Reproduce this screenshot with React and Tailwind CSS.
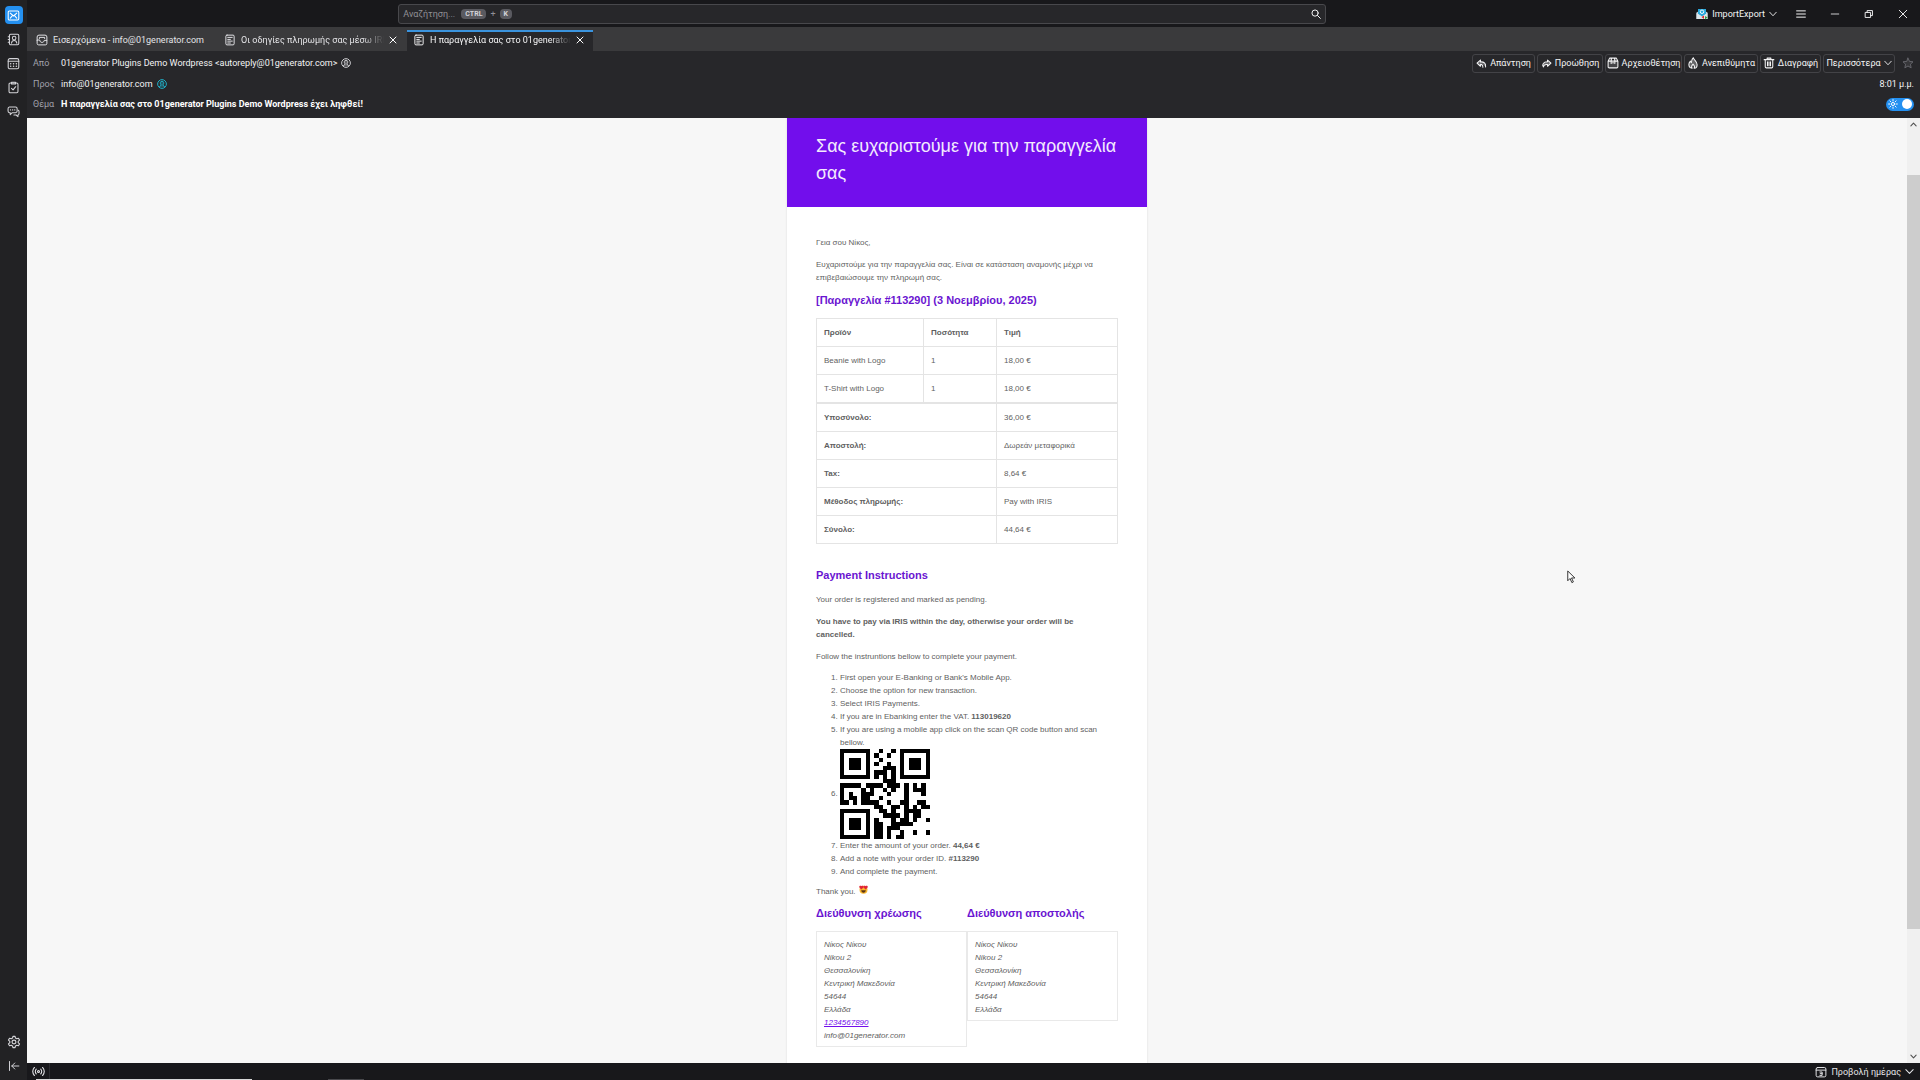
import React from "react";

function Icon({ children, className = "size-3", box = 16, sw = 1.3 }) {
  return (
    <svg
      viewBox={`0 0 ${box} ${box}`}
      className={`shrink-0 ${className}`}
      fill="none"
      stroke="currentColor"
      strokeWidth={sw}
      strokeLinecap="round"
      strokeLinejoin="round"
      aria-hidden="true"
    >
      {children}
    </svg>
  );
}

const MailIcon = () => (
  <Icon className="size-[13px]">
    <rect x="1.5" y="2.5" width="13" height="11" rx="1.5" />
    <path d="M4 5l4 3.6L12 5M4 11.3l2.2-2.6M12 11.3L9.8 8.7" />
  </Icon>
);
const BookIcon = () => (
  <Icon className="size-[13px]">
    <rect x="3" y="1.5" width="11.5" height="13" rx="1.5" />
    <path d="M1.5 4.5H3M1.5 8H3M1.5 11.5H3M5.5 12.5c.3-2 1.3-3.3 3.3-3.3s3 1.3 3.3 3.3" />
    <circle cx="8.8" cy="6.3" r="2.2" />
  </Icon>
);
const CalendarIcon = () => (
  <Icon className="size-[13px]">
    <rect x="1.5" y="2" width="13" height="12.5" rx="2" />
    <path d="M1.5 5.2h13" />
    <path d="M4.5 8.3h.1M8 8.3h.1M11.5 8.3h.1M4.5 11.3h.1M8 11.3h.1M11.5 11.3h.1" strokeWidth="1.8" />
  </Icon>
);
const TasksIcon = () => (
  <Icon className="size-[13px]">
    <rect x="2.5" y="2.5" width="11" height="12" rx="1.5" />
    <path d="M5.5 1.5h5v2.3h-5zM5.5 9l2 2 3.2-4" />
  </Icon>
);
const ChatIcon = () => (
  <Icon className="size-[13px]">
    <path d="M3 2.500h7.500a2 2 0 0 1 2 2v3a2 2 0 0 1-2 2H6.500L4 11.800V9.500H3a2 2 0 0 1-1.700-2v-3A2 2 0 0 1 3 2.500z" />
    <path d="M14 6.500c.6.400.8 1 .8 1.700v2.300c0 1-.5 1.600-1.300 1.800v2l-2.300-2H8.500" />
    <path d="M4.300 6h.1M6.900 6h.1M9.500 6h.1" strokeWidth="1.600" />
  </Icon>
);
const GearIcon = () => (
  <Icon className="size-[14px]">
    <path d="M6.800 1.500h2.400l.5 2 1.400.8 2-.6 1.200 2.100-1.500 1.400v1.600l1.500 1.400-1.200 2.100-2-.6-1.400.8-.5 2H6.800l-.5-2-1.400-.8-2 .6-1.200-2.100 1.500-1.400V7.200L1.700 5.800l1.200-2.100 2 .6 1.400-.8z" />
    <circle cx="8" cy="8" r="2.200" />
  </Icon>
);
const CollapseIcon = () => (
  <Icon className="size-3">
    <path d="M2 2v12M14.500 8H5M9 4L5 8l4 4" />
  </Icon>
);
const InboxIcon = () => (
  <Icon className="size-3">
    <path d="M1.500 8.500V12.500a2 2 0 0 0 2 2h9a2 2 0 0 0 2-2V8.500H11c-.3 1.800-1.300 2.700-3 2.700s-2.700-.9-3-2.700z" />
    <path d="M1.500 8.500V4a2.500 2.500 0 0 1 2.500-2.500h8A2.500 2.500 0 0 1 14.500 4v4.500M4.500 6V4.500h7V6" />
  </Icon>
);
const LetterIcon = () => (
  <Icon className="size-3">
    <rect x="2.500" y="1.500" width="11" height="13" rx="1.500" />
    <path d="M5 4.500h6M5 7.200h3.500M5 9.500h6M5 12h3.500" />
  </Icon>
);
const PersonIcon = ({ color }) => (
  <svg viewBox="0 0 16 16" className={`size-[10px] shrink-0 ${color}`} fill="none" stroke="currentColor" strokeWidth="1.5" aria-hidden="true">
    <circle cx="8" cy="8" r="7" />
    <path d="M3.800 13.300c.2-1.800 1-2.500 2.400-2.800V9C4.600 7.500 4.800 3.500 8 3.500s3.400 4 1.800 5.500v1.500c1.400.3 2.200 1 2.400 2.800" fill="currentColor" fillOpacity=".35" />
  </svg>
);
const CloseIcon = ({ className = "size-2", sw = 2 }) => (
  <Icon className={className} sw={sw}>
    <path d="M2 2l12 12M14 2L2 14" />
  </Icon>
);
const Chevron = ({ className = "size-2" }) => (
  <Icon className={className} sw={1.8}>
    <path d="M1.500 4.500L8 11.500l6.500-7" />
  </Icon>
);
const ReplyIcon = () => (
  <Icon className="size-[11px]" sw={1.5}>
    <path d="M6.500 3L1.500 7.500l5 4.500V9.300c2-.2 3.500.5 3.500 4.200M6.500 5.700V3M6.500 5.700c5-.4 8 2 7.500 7.300" fill="currentColor" fillOpacity=".35" />
  </Icon>
);
const ForwardIcon = () => (
  <Icon className="size-[11px]" sw={1.5}>
    <path d="M9.500 3l5 4.500-5 4.500V9.500C6 9 4 10 3.500 13 1 9.500 3.500 5.500 9.500 5.600z" fill="currentColor" fillOpacity=".35" />
  </Icon>
);
const ArchiveIcon = () => (
  <Icon className="size-3" sw={1.4}>
    <path d="M1.500 5.500L3.500 1.500h9l2 4V13a1.500 1.500 0 0 1-1.500 1.500H3A1.500 1.500 0 0 1 1.500 13zM1.500 5.500h13M6 1.500l-.5 4v3L8 7.500l2.500 1v-3l-.5-4" fill="currentColor" fillOpacity=".15" />
  </Icon>
);
const FlameIcon = () => (
  <Icon className="size-3" sw={1.4}>
    <path d="M8.500 1c.5 3 5 5 5 9.200 0 2.800-2 4.800-4 4.800 1.300-2 .3-3.800-1.500-5.500C6.500 11 5.500 13 6.800 15 4.500 14.700 2.500 13 2.500 10c0-2 1-3.500 2-4.500.2 1 .6 1.600 1.300 2C5.800 5 6.500 2.500 8.500 1z" fill="currentColor" fillOpacity=".3" />
  </Icon>
);
const TrashIcon = () => (
  <Icon className="size-3" sw={1.4}>
    <path d="M1.500 3.500h13M5.500 3.500v-2h5v2M3 3.500V13a1.500 1.500 0 0 0 1.500 1.500h7A1.500 1.500 0 0 0 13 13V3.500M6 6.500v5M8 6.500v5M10 6.500v5" />
  </Icon>
);
const StarIcon = () => (
  <Icon className="size-3">
    <path d="M8 1.500l2 4.400 4.700.5-3.500 3.200 1 4.800L8 12l-4.200 2.400 1-4.800L1.300 6.400 6 5.900z" fill="currentColor" fillOpacity=".25" />
  </Icon>
);
const BroadcastIcon = () => (
  <Icon className="size-[13px]">
    <path d="M3 3c-2.500 3-2.500 7 0 10M5.200 5c-1.500 2-1.500 4 0 6M13 3c2.500 3 2.500 7 0 10M10.800 5c1.500 2 1.500 4 0 6" />
    <circle cx="8" cy="8" r="1.200" />
  </Icon>
);

const QR = [
  "111111100100101111111",
  "100000101001001000001",
  "101110100100001011101",
  "101110101001001011101",
  "101110100011101011101",
  "100000101110101000001",
  "111111101010101111111",
  "000000000011100000000",
  "111110111101110101010",
  "100001010010100101110",
  "101001110001000100010",
  "101101100100000100000",
  "110101111001001100110",
  "000000001100110101011",
  "111111100110100111100",
  "100000100011110101100",
  "101110101000101101001",
  "101110101100111110000",
  "101110101101110000000",
  "100000101101001001001",
  "111111101101011000000",
];

const QrCode = () => (
  <svg viewBox="0 0 21 21" className="inline-block size-[90px] align-middle" shapeRendering="crispEdges" role="img" aria-label="QR">
    {QR.map((row, y) =>
      [...row].map((c, x) => (c === "1" ? <rect key={`${x}-${y}`} x={x} y={y} width="1" height="1" fill="#000" /> : null))
    )}
  </svg>
);

const HeartEyes = () => (
  <svg viewBox="0 0 18 18" className="ml-px inline-block size-[9px] align-baseline" role="img" aria-label="😍">
    <circle cx="9" cy="9.500" r="8" fill="#f8b62b" />
    <path d="M4.500 10.500h9c0 3-2 5-4.500 5s-4.500-2-4.500-5z" fill="#5b3416" />
    <path d="M4.800 9L.8 5C-.8 2.500 2.800-.3 4.800 2.300 6.800-.3 10 2.500 8.600 5zM13.200 9l-4-4c-1.400-2.500 2-5.300 4-2.700 2-2.600 5.600.2 4 2.700z" fill="#e0243a" />
  </svg>
);

function RailButton({ label, active, children }) {
  return (
    <button
      aria-label={label}
      className={`flex h-[18px] w-[18px] items-center justify-center rounded-sm ${active ? "bg-[#2490f0] text-white" : "text-[#d4d4d8]"}`}
    >
      {children}
    </button>
  );
}

function Tab({ icon, children, active, closable, className }) {
  return (
    <div
      role="tab"
      aria-selected={!!active}
      className={`flex items-center gap-[5px] pl-[6px] ${active ? "mt-[3px] border-t-2 border-[#3a93dd] bg-[#27272a] pb-[3px] text-[#f4f4f5]" : "pt-px text-[#e4e4e7]"} ${className}`}
    >
      {icon}
      <span
        className={`min-w-0 flex-1 overflow-hidden whitespace-nowrap ${closable ? "[mask-image:linear-gradient(to_right,black_85%,transparent)]" : ""}`}
      >
        {children}
      </span>
      {closable && (
        <button aria-label="Κλείσιμο" className="mr-[9px] text-white">
          <CloseIcon />
        </button>
      )}
    </div>
  );
}

function ActionButton({ icon, children, className }) {
  return (
    <button className={`flex h-[19px] items-center justify-center gap-[3px] rounded-[3px] border border-[#434347] whitespace-nowrap ${className}`}>
      {icon}
      {children}
    </button>
  );
}

const keyClass = "rounded-sm bg-[#5a5a60] px-1 text-[7px] leading-[10px] font-bold text-[#d4d4d8]";

function TitleBar() {
  return (
    <div className="flex h-[27px] shrink-0 items-center bg-[#18181b] text-[#f4f4f5]">
      <div className="min-w-0 flex-[5]" />
      <label className="flex h-5 w-[49%] max-w-[935px] items-center gap-1 rounded-[3px] border border-[#48484c] bg-[#27272a] pr-1 pl-1">
        <input
          aria-label="Αναζήτηση"
          placeholder="Αναζήτηση..."
          className="w-[54px] bg-transparent text-[9px] text-white outline-none placeholder:text-[#909096]"
        />
        <span className="flex flex-1 items-center gap-1 text-[#909096]">
          <kbd className={`font-[inherit] ${keyClass}`}>CTRL</kbd>
          <span>+</span>
          <kbd className={`font-[inherit] ${keyClass}`}>K</kbd>
        </span>
        <Icon className="size-[10px]" sw={1.6}>
          <circle cx="6.500" cy="6.500" r="5" />
          <path d="M10.300 10.300L15 15" />
        </Icon>
      </label>
      <div className="flex min-w-0 flex-[8] items-center justify-end">
        <button className="mr-[19px] flex items-center gap-1">
          <svg viewBox="0 0 24 24" className="size-3" aria-hidden="true">
            <path d="M1 9l11-6 11 6v13H1z" fill="#c9d6df" />
            <path d="M4 2h16v10l-8 5-8-5z" fill="#2ba9dc" />
            <circle cx="12" cy="7.500" r="3.500" fill="none" stroke="#fff" strokeWidth="1.8" />
            <path d="M1 10l11 7 11-7v12H1z" fill="#dce5ea" />
            <path d="M11 18l5-3v7z" fill="#d92c2c" />
            <path d="M23 19l-5-3v7z" fill="#3b9b46" />
          </svg>
          ImportExport
          <Chevron />
        </button>
        <button aria-label="Μενού" className="mr-6">
          <Icon className="size-[10px]" sw={1.6}>
            <path d="M1 3h14M1 8h14M1 13h14" />
          </Icon>
        </button>
        <button aria-label="Ελαχιστοποίηση" className="mr-6">
          <Icon className="size-[10px]"><path d="M2 8h12" /></Icon>
        </button>
        <button aria-label="Επαναφορά" className="mr-6">
          <Icon className="size-[10px]" sw={1.5}>
            <path d="M2.500 5.500h8v8h-8zM5 5.500v-3h8.500v8h-3" />
          </Icon>
        </button>
        <button aria-label="Κλείσιμο παραθύρου" className="mr-3">
          <CloseIcon className="size-[10px]" sw={1.5} />
        </button>
      </div>
    </div>
  );
}

function MessageHeader() {
  const row = "flex items-center";
  const label = "w-7 shrink-0 text-[#a1a1aa]";
  return (
    <header className="relative h-[67px] shrink-0 bg-[#27272a] pr-[6px] pl-[6px] text-[#f4f4f5]">
      <div className={`${row} h-6`}>
        <span className={label}>Από</span>
        <span className="mr-1">01generator Plugins Demo Wordpress &lt;autoreply@01generator.com&gt;</span>
        <PersonIcon color="text-[#d4d4d8]" />
        <div className="ml-auto flex items-center gap-[2px]">
          <ActionButton icon={<ReplyIcon />} className="w-[63px]">Απάντηση</ActionButton>
          <ActionButton icon={<ForwardIcon />} className="w-[66px]">Προώθηση</ActionButton>
          <ActionButton icon={<ArchiveIcon />} className="w-[77px]">Αρχειοθέτηση</ActionButton>
          <ActionButton icon={<FlameIcon />} className="w-[74px]">Ανεπιθύμητα</ActionButton>
          <ActionButton icon={<TrashIcon />} className="w-[61px]">Διαγραφή</ActionButton>
          <ActionButton className="w-[72px]">Περισσότερα <Chevron /></ActionButton>
          <button aria-label="Αστέρι" className="ml-[5px] text-[#66666c]"><StarIcon /></button>
        </div>
      </div>
      <div className={`${row} h-[18px]`}>
        <span className={label}>Προς</span>
        <span className="mr-1">info@01generator.com</span>
        <PersonIcon color="text-[#20b8d0]" />
        <span className="ml-auto">8:01 μ.μ.</span>
      </div>
      <div className={`${row} h-[22px]`}>
        <span className={label}>Θέμα</span>
        <span className="font-bold text-white">Η παραγγελία σας στο 01generator Plugins Demo Wordpress έχει ληφθεί!</span>
        <label className="relative ml-auto flex h-[13px] w-7 items-center justify-between rounded-full bg-[#2490f0] px-[2px] text-white">
          <input type="checkbox" defaultChecked aria-label="Φωτεινή εμφάνιση" className="absolute inset-0 opacity-0" />
          <Icon className="size-[10px]" sw={1.5}>
            <circle cx="8" cy="8" r="2.500" />
            <path d="M8 1v2M8 13v2M1 8h2M13 8h2M3 3l1.500 1.500M11.500 11.500L13 13M13 3l-1.500 1.500M4.500 11.500L3 13" />
          </Icon>
          <span className="size-[10px] rounded-full bg-white" />
        </label>
      </div>
    </header>
  );
}

const items = [["Beanie with Logo", "1", "18,00 €"], ["T-Shirt with Logo", "1", "18,00 €"]];
const totals = [
  ["Υποσύνολο:", "36,00 €"],
  ["Αποστολή:", "Δωρεάν μεταφορικά"],
  ["Tax:", "8,64 €"],
  ["Μέθοδος πληρωμής:", "Pay with IRIS"],
  ["Σύνολο:", "44,64 €"],
];

const cell = "border border-[#e4e4e4] px-[7px] text-left";
const h2Class = "text-[11px] leading-[14px] font-bold text-[#6a14d1]";

function OrderTable() {
  return (
    <table className="w-full table-fixed border-collapse border border-[#e4e4e4]">
      <colgroup>
        <col className="w-[107px]" />
        <col className="w-[73px]" />
        <col />
      </colgroup>
      <thead>
        <tr className="h-7">
          {["Προϊόν", "Ποσότητα", "Τιμή"].map((t) => <th key={t} className={cell}>{t}</th>)}
        </tr>
      </thead>
      <tbody>
        {items.map((r) => (
          <tr key={r[0]} className="h-7">{r.map((t, i) => <td key={i} className={cell}>{t}</td>)}</tr>
        ))}
      </tbody>
      <tfoot>
        {totals.map(([k, v], i) => (
          <tr key={k} className={i === 0 ? "h-[29px]" : "h-7"}>
            <th colSpan={2} className={`${cell} ${i === 0 ? "border-t-2" : ""}`}>{k}</th>
            <td className={`${cell} ${i === 0 ? "border-t-2" : ""}`}>{v}</td>
          </tr>
        ))}
      </tfoot>
    </table>
  );
}

function Address({ title, lines, children }) {
  return (
    <section className="flex-1">
      <h2 className={`${h2Class} mb-[11px]`}>{title}</h2>
      <address className="border border-[#e9e9e9] px-[7px] pt-[6px] pb-1">
        {lines.map((l) => <div key={l}>{l}</div>)}
        {children}
      </address>
    </section>
  );
}

const addressLines = ["Νίκος Νίκου", "Nikou 2", "Θεσσαλονίκη", "Κεντρική Μακεδονία", "54644", "Ελλάδα"];

function Email() {
  return (
    <article className="w-[360px] bg-white font-['Liberation_Sans',Arial,sans-serif] text-[8px] leading-[13px] text-[#5f5f5f] shadow-[0_0_1px_1px_#eeeeee]">
      <h1 className="h-[89px] bg-[#720eec] px-[29px] pt-[15px] text-[18px] leading-[27px] text-[#f3eafd]">
        Σας ευχαριστούμε για την παραγγελία σας
      </h1>
      <div className="px-[29px] pt-[29px] pb-4">
        <p className="mb-[9px]">Γεια σου Νίκος,</p>
        <p className="mb-[9px]">Ευχαριστούμε για την παραγγελία σας. Είναι σε κατάσταση αναμονής μέχρι να επιβεβαιώσουμε την πληρωμή σας.</p>
        <h2 className={`${h2Class} mb-[11px]`}>[Παραγγελία #113290] (3 Νοεμβρίου, 2025)</h2>
        <OrderTable />
        <h2 className={`${h2Class} mt-6 mb-[11px]`}>Payment Instructions</h2>
        <p className="mb-[9px]">Your order is registered and marked as pending.</p>
        <p className="mb-[9px] font-bold">
          You have to pay via IRIS within the day, otherwise your order will be<br />cancelled.
        </p>
        <p className="mb-2">Follow the instruntions bellow to complete your payment.</p>
        <ol className="mb-[7px] list-decimal pl-6">
          <li>First open your E-Banking or Bank&apos;s Mobile App.</li>
          <li>Choose the option for new transaction.</li>
          <li>Select IRIS Payments.</li>
          <li>If you are in Ebanking enter the VAT. <b>113019620</b></li>
          <li>If you are using a mobile app click on the scan QR code button and scan<br />bellow.</li>
          <li><QrCode /></li>
          <li>Enter the amount of your order. <b>44,64 €</b></li>
          <li>Add a note with your order ID. <b>#113290</b></li>
          <li>And complete the payment.</li>
        </ol>
        <p className="mb-2">Thank you. <HeartEyes /></p>
        <div className="flex items-start">
          <Address title="Διεύθυνση χρέωσης" lines={addressLines}>
            <div><a href="tel:1234567890" className="text-[#720eec] underline">1234567890</a></div>
            <div>info@01generator.com</div>
          </Address>
          <Address title="Διεύθυνση αποστολής" lines={addressLines} />
        </div>
      </div>
    </article>
  );
}

export default function App() {
  return (
    <div className="flex h-screen overflow-hidden bg-[#18181b] font-[Roboto,'Noto_Sans',sans-serif] text-[9px] leading-[14px]">
      <nav className="flex w-[27px] shrink-0 flex-col items-center gap-[6px] bg-[#222224] pt-[6px] pb-[5px]">
        <RailButton label="Αλληλογραφία" active><MailIcon /></RailButton>
        <RailButton label="Επαφές"><BookIcon /></RailButton>
        <RailButton label="Ημερολόγιο"><CalendarIcon /></RailButton>
        <RailButton label="Εργασίες"><TasksIcon /></RailButton>
        <RailButton label="Συνομιλία"><ChatIcon /></RailButton>
        <div className="flex-1" />
        <RailButton label="Ρυθμίσεις"><GearIcon /></RailButton>
        <RailButton label="Σύμπτυξη"><CollapseIcon /></RailButton>
      </nav>
      <div className="flex min-w-0 flex-1 flex-col">
        <TitleBar />
        <div role="tablist" className="flex h-6 shrink-0 bg-[#3a3a3c] pl-[3px]">
          <Tab icon={<InboxIcon />} className="w-[188px]">Εισερχόμενα - info@01generator.com</Tab>
          <Tab icon={<LetterIcon />} closable className="w-[188px]">Οι οδηγίες πληρωμής σας μέσω IRIS</Tab>
          <Tab icon={<LetterIcon />} closable active className="ml-px w-[186px]">Η παραγγελία σας στο 01generator</Tab>
        </div>
        <MessageHeader />
        <main className="flex min-h-0 flex-1 bg-[#f7f7f7]">
          <div className="flex min-w-0 flex-1 justify-center overflow-hidden">
            <Email />
          </div>
          <div className="flex w-[13px] flex-col items-center bg-[#f0f0f0] py-[3px] text-[#505050]">
            <Icon className="size-[7px]" sw={2.5}><path d="M2 11l6-6 6 6" /></Icon>
            <div className="min-h-0 basis-[5%]" />
            <div className="w-full grow-[85] bg-[#cdcdcd]" />
            <div className="grow-[14]" />
            <Icon className="size-[7px]" sw={2.5}><path d="M2 5l6 6 6-6" /></Icon>
          </div>
        </main>
        <footer className="flex h-[17px] shrink-0 items-center text-[#e4e4e7]">
          <div className="flex h-full w-[23px] items-center justify-center border-r border-[#2c2c30]"><BroadcastIcon /></div>
          <button className="mr-[6px] ml-auto flex items-center gap-1">
            <Icon className="size-3">
              <rect x="1.500" y="2" width="13" height="12.500" rx="2" />
              <path d="M1.500 5.500h13M6.500 8h3v4.500h-3M7 10.200h2.500" />
            </Icon>
            Προβολή ημέρας
            <Chevron className="size-[9px]" />
          </button>
        </footer>
      </div>
      <div className="pointer-events-none absolute bottom-0 left-9 h-px w-[216px] bg-[#d8d8d8]" />
      <div className="pointer-events-none absolute bottom-0 left-[328px] h-px w-9 bg-[#48484c]" />
      <svg viewBox="0 0 12 18" className="pointer-events-none absolute top-[570px] left-[1567px] h-[14px] w-[9px]" aria-hidden="true">
        <path d="M1 1v13l3-3 2.500 5.500 2-1L6 10.300h4.500z" fill="#fff" stroke="#222" strokeWidth="1.2" />
      </svg>
    </div>
  );
}
